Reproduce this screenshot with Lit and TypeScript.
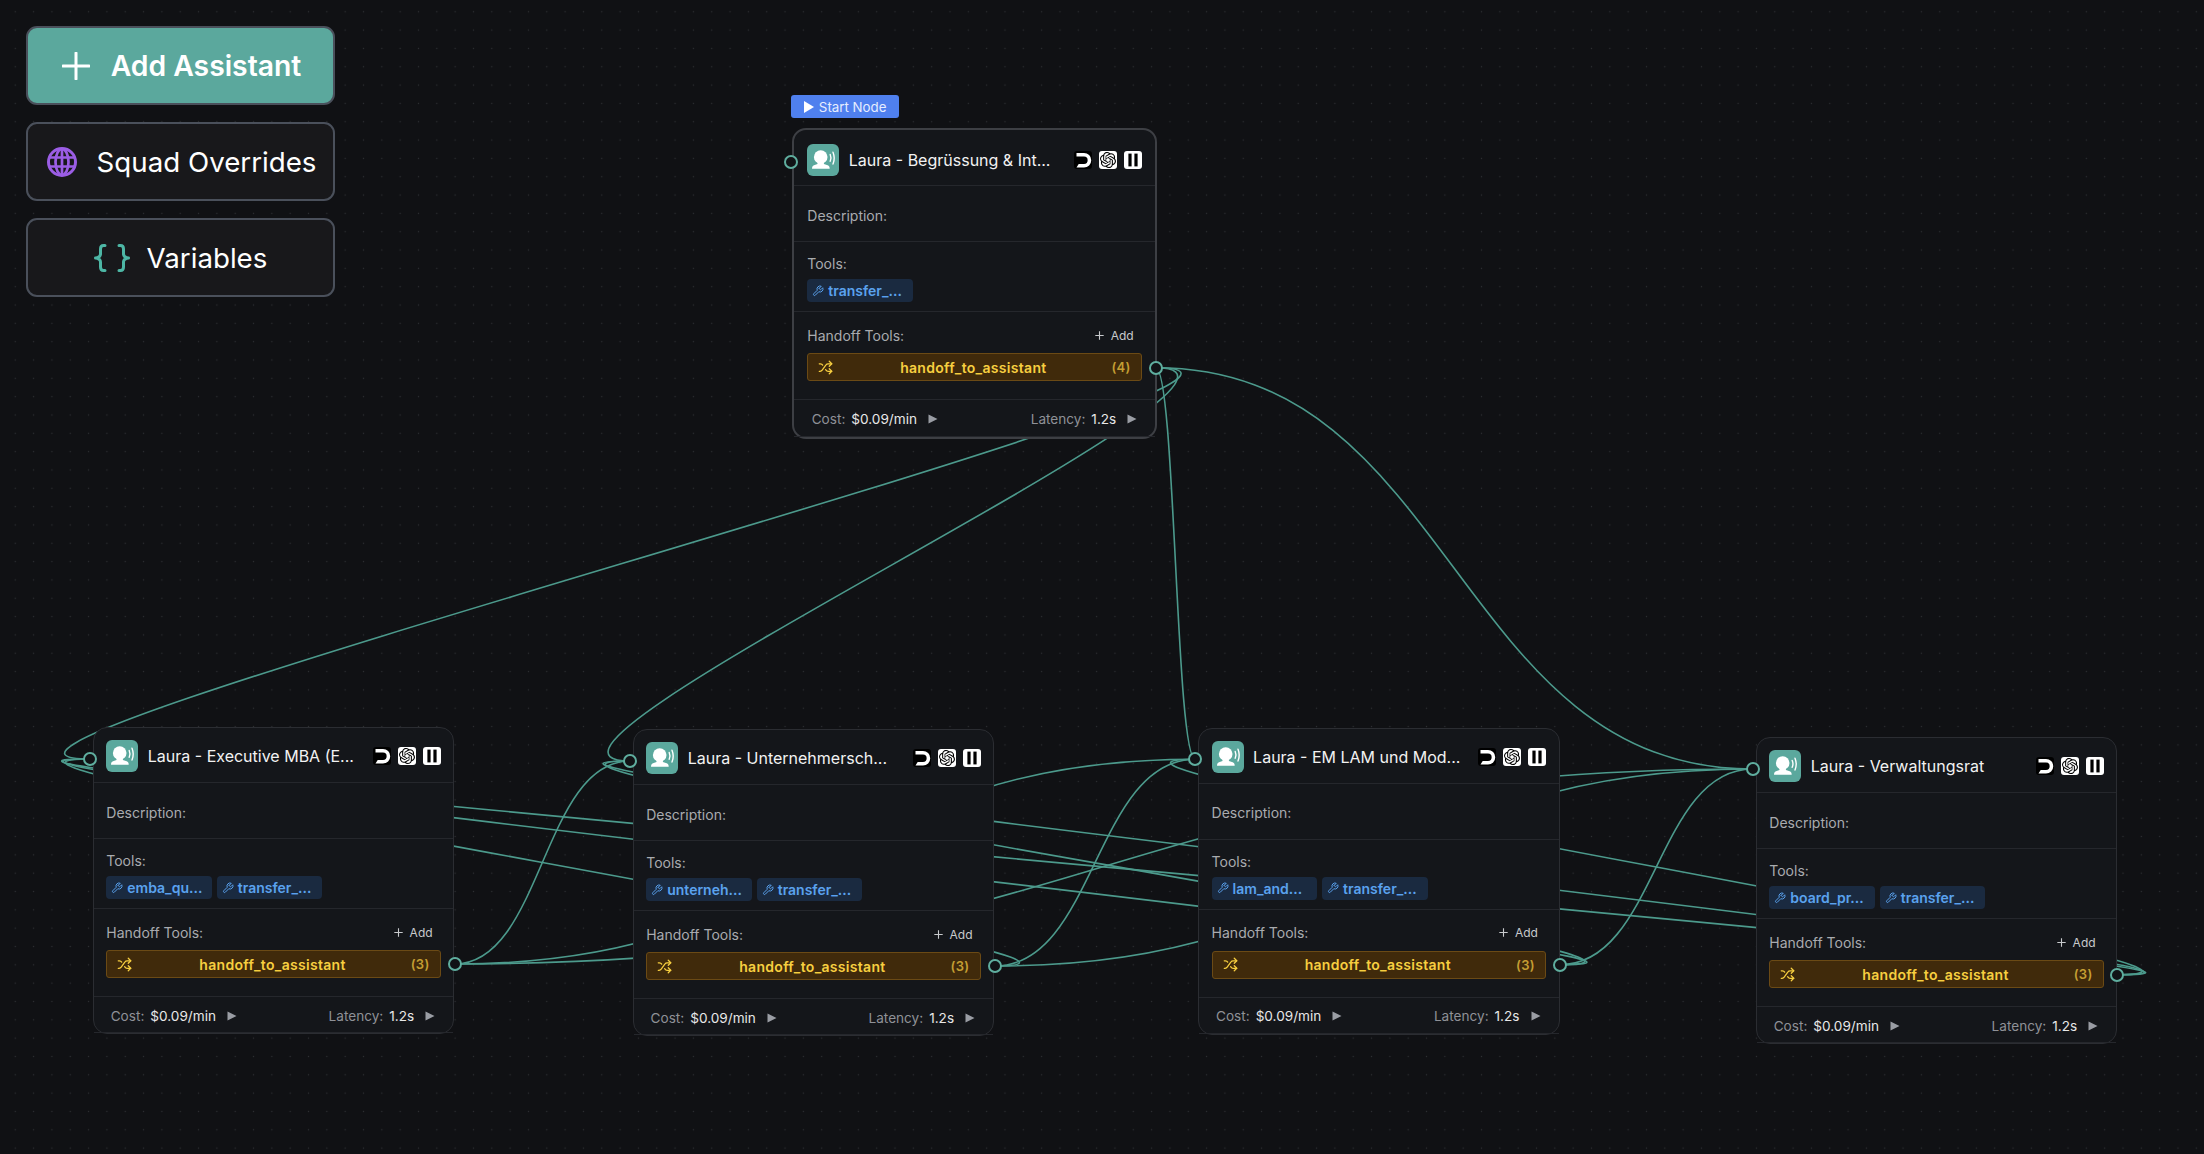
import { LitElement, html, css, svg } from "lit";
import { customElement } from "lit/decorators.js";

interface NodeData {
  id: number; title: string; x: number; y: number; w: number; start?: boolean;
  tools: string[]; count: number; ty: number; sy: number; tx: number; sx: number;
}

const NODES: NodeData[] = [
  { id: 0, title: "Laura - Begrüssung & Int...", x: 791.7, y: 128, w: 365.6, start: true, tools: ["transfer_..."], count: 4, tx: 791, ty: 162, sx: 1155.7, sy: 367.7 },
  { id: 1, title: "Laura - Executive MBA (E...", x: 92.7, y: 727, w: 361.5, tools: ["emba_qu...", "transfer_..."], count: 3, tx: 90, ty: 759, sx: 454.7, sy: 964 },
  { id: 2, title: "Laura - Unternehmersch...", x: 632.6, y: 729, w: 361.5, tools: ["unterneh...", "transfer_..."], count: 3, tx: 630, ty: 761, sx: 994.8, sy: 966 },
  { id: 3, title: "Laura - EM LAM und Mod...", x: 1198, y: 727.6, w: 361.5, tools: ["lam_and...", "transfer_..."], count: 3, tx: 1195.3, ty: 759.3, sx: 1560, sy: 964.7 },
  { id: 4, title: "Laura - Verwaltungsrat", x: 1755.7, y: 737.4, w: 361.5, tools: ["board_pr...", "transfer_..."], count: 3, tx: 1752.7, ty: 769, sx: 2117.3, sy: 974.7 },
];

const off = (d: number) => (d >= 0 ? 0.5 * d : 7.35 * Math.sqrt(-d));

function edgePath(a: NodeData, b: NodeData) {
  const d = b.tx - a.sx;
  const c1 = a.sx + off(d);
  const c2 = b.tx - off(d);
  return `M${a.sx},${a.sy} C${c1},${a.sy} ${c2},${b.ty} ${b.tx},${b.ty}`;
}

const EDGES: string[] = [];
for (const t of NODES.slice(1)) EDGES.push(edgePath(NODES[0], t));
for (const s of NODES.slice(1)) for (const t of NODES.slice(1)) if (s !== t) EDGES.push(edgePath(s, t));

const OPENAI = "M22.2819 9.8211a5.9847 5.9847 0 0 0-.5157-4.9108 6.0462 6.0462 0 0 0-6.5098-2.9A6.0651 6.0651 0 0 0 4.9807 4.1818a5.9847 5.9847 0 0 0-3.9977 2.9 6.0462 6.0462 0 0 0 .7427 7.0966 5.98 5.98 0 0 0 .511 4.9107 6.051 6.051 0 0 0 6.5146 2.9001A5.9847 5.9847 0 0 0 13.2599 24a6.0557 6.0557 0 0 0 5.7718-4.2058 5.9894 5.9894 0 0 0 3.9977-2.9001 6.0557 6.0557 0 0 0-.7475-7.0729zm-9.022 12.6081a4.4755 4.4755 0 0 1-2.8764-1.0408l.1419-.0804 4.7783-2.7582a.7948.7948 0 0 0 .3927-.6813v-6.7369l2.02 1.1686a.071.071 0 0 1 .038.052v5.5826a4.504 4.504 0 0 1-4.4945 4.4944zm-9.6607-4.1254a4.4708 4.4708 0 0 1-.5346-3.0137l.142.0852 4.783 2.7582a.7712.7712 0 0 0 .7806 0l5.8428-3.3685v2.3324a.0804.0804 0 0 1-.0332.0615L9.74 19.9502a4.4992 4.4992 0 0 1-6.1408-1.6464zM2.3408 7.8956a4.485 4.485 0 0 1 2.3655-1.9728V11.6a.7664.7664 0 0 0 .3879.6765l5.8144 3.3543-2.0201 1.1685a.0757.0757 0 0 1-.071 0l-4.8303-2.7865A4.504 4.504 0 0 1 2.3408 7.872zm16.5963 3.8558L13.1038 8.364 15.1192 7.2a.0757.0757 0 0 1 .071 0l4.8303 2.7913a4.4944 4.4944 0 0 1-.6765 8.1042v-5.6772a.79.79 0 0 0-.407-.667zm2.0107-3.0231l-.142-.0852-4.7735-2.7818a.7759.7759 0 0 0-.7854 0L9.409 9.2297V6.8974a.0662.0662 0 0 1 .0284-.0615l4.8303-2.7866a4.4992 4.4992 0 0 1 6.6802 4.66zM8.3065 12.863l-2.02-1.1638a.0804.0804 0 0 1-.038-.0567V6.0742a4.4992 4.4992 0 0 1 7.3757-3.4537l-.142.0805L8.704 5.459a.7948.7948 0 0 0-.3927.6813zm1.0976-2.3654l2.602-1.4998 2.6069 1.4998v2.9994l-2.5974 1.5-2.6067-1.5Z";

const avatarIcon = html`<svg viewBox="0 0 32 32" width="32" height="32">
  <circle cx="13.7" cy="13" r="6.8" fill="#fff"/>
  <path fill="#fff" d="M10.5 17h6.4v3l3.8 1.2c1.4.5 2 1.5 2 3.5H5c0-2 .6-3 2-3.5l3.5-1.2z"/>
  <path fill="none" stroke="#fff" stroke-width="1.4" stroke-linecap="round" d="M23.2 10.5c.9 2 .9 4.8 0 6.8M26 8.2c1.4 3.4 1.4 8.4 0 11.8"/>
</svg>`;

const wrench = html`<svg class="wr" viewBox="0 0 24 24" width="12" height="12" fill="none" stroke="currentColor" stroke-width="2" stroke-linecap="round" stroke-linejoin="round"><path d="M14.7 6.3a1 1 0 0 0 0 1.4l1.6 1.6a1 1 0 0 0 1.4 0l3.77-3.77a6 6 0 0 1-7.94 7.94l-6.91 6.91a2.12 2.12 0 0 1-3-3l6.91-6.91a6 6 0 0 1 7.94-7.94l-3.76 3.76z"/></svg>`;

const shuffle = html`<svg viewBox="0 0 24 24" width="15" height="15" fill="none" stroke="currentColor" stroke-width="2" stroke-linecap="round" stroke-linejoin="round"><path d="M2 18h1.4c1.3 0 2.5-.6 3.3-1.7l6.1-8.6c.7-1.1 2-1.7 3.3-1.7H22"/><path d="m18 2 4 4-4 4"/><path d="M2 6h1.9c1.5 0 2.9.9 3.6 2.2"/><path d="M22 18h-5.9c-1.3 0-2.6-.7-3.3-1.8l-.5-.8"/><path d="m18 14 4 4-4 4"/></svg>`;

const tri = html`<svg viewBox="0 0 10 10" width="10" height="10"><path d="M0.5 0.5 L9.5 5 L0.5 9.5 Z" fill="#9a9da4"/></svg>`;

const providerIcons = html`
  <span class="prov black"><svg viewBox="0 0 18 18" width="18" height="18"><path fill="#fff" d="M2.5 2h7.5a7 7 0 0 1 0 14.5H2.5l2.2-3.6h5.3a3.4 3.4 0 0 0 0-7.3H2.5z"/></svg></span>
  <span class="prov white"><svg viewBox="0 0 24 24" width="16" height="16"><path fill="#000" d="${OPENAI}"/></svg></span>
  <span class="prov white"><svg viewBox="0 0 18 18" width="18" height="18"><rect x="4.4" y="2.6" width="3.2" height="12.8" fill="#000"/><rect x="10.4" y="2.6" width="3.2" height="12.8" fill="#000"/></svg></span>
`;

@customElement("app-root")
export class AppRoot extends LitElement {
  static styles = css`
    :host {
      display: block;
      width: 2204px;
      height: 1154px;
      overflow: hidden;
      position: relative;
      font-family: Inter, "Liberation Sans", sans-serif;
      background-color: #101114;
      background-image: radial-gradient(circle, #2e3034 0.7px, transparent 1px);
      background-size: 18.33px 18.33px;
      background-position: 6.1px 2.6px;
    }
    .edges { position: absolute; left: 0; top: 0; width: 2204px; height: 1154px; }
    .edges path { fill: none; stroke: #4c9a8c; stroke-width: 1.6; }

    .panel {
      position: absolute; left: 26px; top: 26px; width: 309px;
      display: flex; flex-direction: column; gap: 16.6px;
    }
    .btn {
      box-sizing: border-box; height: 79.4px; border-radius: 11px;
      border: 2px solid #4a505b; background: #18181b; color: #fff;
      display: flex; align-items: center; justify-content: center;
      font-size: 27.7px; font-weight: 400;
    }
    .btn.primary { background: #5ba89d; font-weight: 600; font-size: 28.3px; gap: 21px; padding-left: 2px; }
    .btn.squad { gap: 20px; padding-left: 2px; }
    .btn.vars { gap: 17px; }

    .node {
      position: absolute; box-sizing: border-box;
      background: #14161a; border: 1px solid #2b2d32; border-radius: 14px;
      color: #e8e8e8;
    }
    .node.start { border: 2px solid #3d3f44; }
    .badge {
      position: absolute; left: -2.7px; top: -35px; height: 23px; width: 108.3px;
      box-sizing: border-box;
      background: #4f80ee; border-radius: 3px; color: #e6edff;
      display: flex; align-items: center; justify-content: center; gap: 5px;
      font-size: 13.3px; font-weight: 400;
    }
    .node section { box-sizing: border-box; padding-left: 12.6px; padding-right: 12.6px; border-bottom: 1px solid #25272c; }
    .node.start section { padding-left: 13.6px; padding-right: 13.6px; }
    .node section:last-child { border-bottom: 0; }
    .node .head { height: 55px; display: flex; align-items: center; gap: 9.5px; padding-top: 2px; }
    .node.start .head { height: 56px; padding-top: 4px; }
    .avatar { width: 32px; height: 32px; border-radius: 6px; background: #5ba89d; flex: none; display: flex; }
    .title { flex: 1; font-size: 16px; font-weight: 400; color: #f2f2f2; white-space: nowrap; overflow: hidden; }
    .provs { display: flex; gap: 7px; }
    .prov { width: 18px; height: 18px; border-radius: 3px; display: flex; align-items: center; justify-content: center; }
    .prov.black { background: #000; }
    .prov.white { background: #fff; }
    .label { font-size: 14px; color: #a9abaf; }
    .node .desc { height: 56px; display: flex; align-items: center; padding-top: 3px; }
    .node .tools { height: 70px; padding-top: 13px; display: flex; flex-direction: column; gap: 7px; }
    .tools .label { line-height: 17px; }
    .chips { display: flex; gap: 5px; }
    .chip {
      box-sizing: border-box; width: 105.5px; height: 23px; border-radius: 4px;
      background: #1a2a40; color: #5aa2ee; font-size: 14px; font-weight: 600;
      display: flex; align-items: center; gap: 4px; padding-left: 5px; white-space: nowrap;
    }
    .hand { height: 88px; }
    .hand-top { display: flex; align-items: center; justify-content: space-between; height: 41px; padding-top: 5px; box-sizing: border-box; }
    .add { display: flex; align-items: center; gap: 6.5px; font-size: 12px; color: #c8cacd; padding-right: 8px; }
    .bar {
      box-sizing: border-box; height: 28px; border-radius: 3px;
      background: #402a0b; border: 1px solid #6b4a15; color: #f7cf40;
      display: flex; align-items: center; padding: 0 10px; position: relative;
      font-size: 14px; letter-spacing: 0.3px; font-weight: 600;
    }
    .bar svg { flex: none; }
    .bar .name { flex: 1; text-align: center; padding-left: 2px; }
    .bar .cnt { color: #c49e33; font-weight: 600; font-size: 13px; }
    .node .foot { height: 36px; display: flex; align-items: center; justify-content: space-between; padding: 2px 18px 0 17px; font-size: 13.6px; }
    .node.start .foot { height: 37px; padding: 2px 18px 0 18px; }
    .foot > div { display: flex; align-items: center; gap: 6px; color: #8f9197; }
    .foot b { font-weight: 400; color: #e8e8e8; }
    .foot svg { margin-left: 5px; }
    .handle {
      position: absolute; width: 14px; height: 14px; box-sizing: border-box;
      border-radius: 50%; border: 2.4px solid #5fae9f; background: #111316;
      transform: translate(-50%, -50%);
    }
  `;

  renderNode(n: NodeData) {
    const bw = n.start ? 2 : 1;
    return html`<div class="node ${n.start ? "start" : ""}" style="left:${n.x}px;top:${n.y}px;width:${n.w}px">
      ${n.start ? html`<div class="badge"><svg viewBox="0 0 10 12" width="10" height="12"><path d="M0 0 L10 6 L0 12 Z" fill="#fff"/></svg>Start Node</div>` : ""}
      <section class="head">
        <span class="avatar">${avatarIcon}</span>
        <span class="title">${n.title}</span>
        <span class="provs">${providerIcons}</span>
      </section>
      <section class="desc"><span class="label">Description:</span></section>
      <section class="tools">
        <span class="label">Tools:</span>
        <div class="chips">${n.tools.map((t) => html`<span class="chip">${wrench}${t}</span>`)}</div>
      </section>
      <section class="hand">
        <div class="hand-top"><span class="label">Handoff Tools:</span>
          <span class="add"><svg viewBox="0 0 9 9" width="9" height="9"><path d="M4.5 0.3V8.7M0.3 4.5H8.7" stroke="#c8cacd" stroke-width="1.1" fill="none"/></svg>Add</span></div>
        <div class="bar">${shuffle}<span class="name">handoff_to_assistant</span><span class="cnt">(${n.count})</span></div>
      </section>
      <section class="foot">
        <div>Cost: <b>$0.09/min</b>${tri}</div>
        <div>Latency: <b>1.2s</b>${tri}</div>
      </section>
      <span class="handle" style="left:${n.tx - n.x - bw}px;top:${n.ty - n.y - bw}px"></span>
      <span class="handle" style="left:${n.sx - n.x - bw}px;top:${n.sy - n.y - bw}px"></span>
    </div>`;
  }

  render() {
    return html`
      <svg class="edges" viewBox="0 0 2204 1154">${EDGES.map((d) => svg`<path d="${d}"></path>`)}</svg>
      ${NODES.map((n) => this.renderNode(n))}
      <div class="panel">
        <div class="btn primary"><svg viewBox="0 0 28 28" width="28" height="28"><path d="M14 1V27M1 14H27" stroke="#fff" stroke-width="3" stroke-linecap="round" fill="none"/></svg>Add Assistant</div>
        <div class="btn squad"><svg viewBox="0 0 30 30" width="30" height="30">
          <circle cx="15" cy="15" r="14.5" fill="#18181b"/>
          <g fill="none" stroke="#9b5de5" stroke-width="2.7">
            <circle cx="15" cy="15" r="13.5" stroke-width="3"/>
            <ellipse cx="15" cy="15" rx="6.5" ry="13"/>
            <path d="M15 2V28M2.5 10.5H27.5M2.5 19.5H27.5"/>
          </g></svg>Squad Overrides</div>
        <div class="btn vars"><svg viewBox="0 0 36 28" width="36" height="28"><g fill="none" stroke="#4db6a5" stroke-width="3" stroke-linecap="round" stroke-linejoin="round"><path d="M11 1.5H9.5C7.5 1.5 6.5 3 6.5 5V10C6.5 12 5 13.5 1.5 14C5 14.5 6.5 16 6.5 18V23C6.5 25 7.5 26.5 9.5 26.5H11"/><path d="M25 1.5H26.5C28.5 1.5 29.5 3 29.5 5V10C29.5 12 31 13.5 34.5 14C31 14.5 29.5 16 29.5 18V23C29.5 25 28.5 26.5 26.5 26.5H25"/></g></svg>Variables</div>
      </div>
    `;
  }
}
